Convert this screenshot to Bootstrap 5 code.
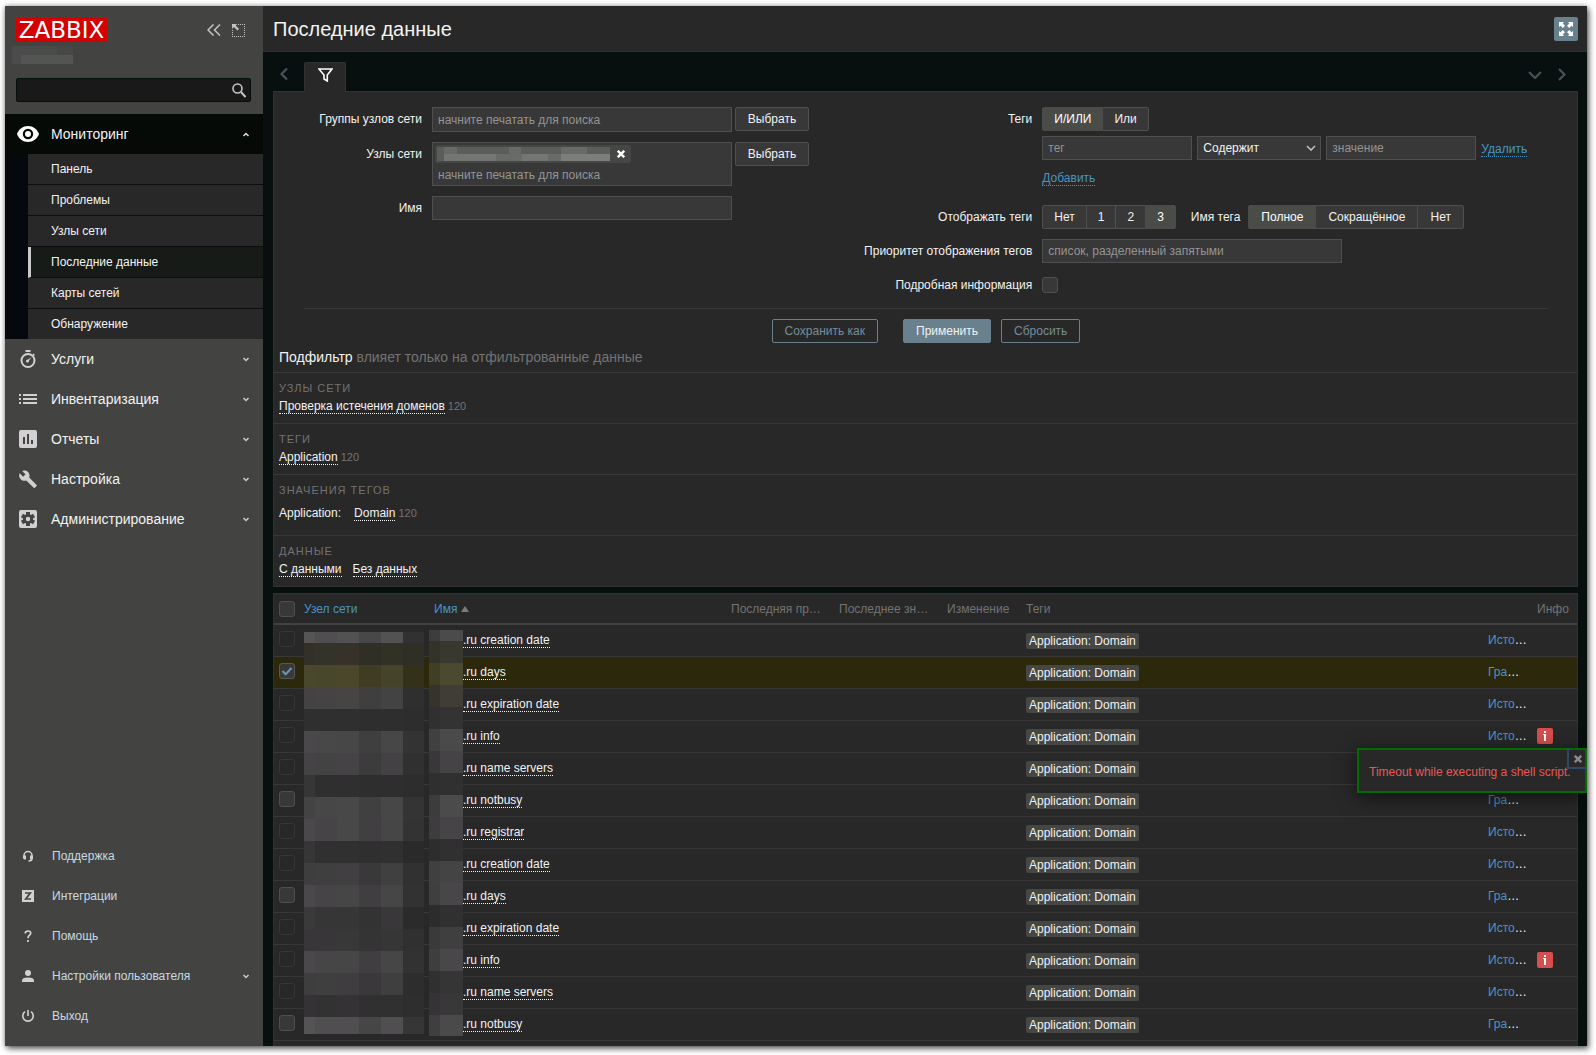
<!DOCTYPE html>
<html lang="ru">
<head>
<meta charset="utf-8">
<meta name="viewport" content="width=device-width, initial-scale=1">
<title>Последние данные</title>
<link href="https://cdn.jsdelivr.net/npm/bootstrap@5.3.0/dist/css/bootstrap.min.css" rel="stylesheet">
<style>
:root{--line:#383838;--panel:#282828;--edge:#4f4f4f;--ink:#f2f2f2;--muted:#737373;--blue:#4796c4;--steel:#69808d;--field:#383838;--sel:#4a4c48}
body{font-family:"Liberation Sans",Arial,sans-serif;font-size:12px;line-height:14px;color:var(--ink);background:#fff;padding:6px 9px 9px 5px}
.shell{min-height:calc(100vh - 15px);box-shadow:0 0 5px rgba(0,0,0,.35),2px 3px 6px rgba(0,0,0,.55);background:#07100e}
svg{display:block;flex:none}
a{text-decoration:none;color:inherit}
/* sidebar */
.side{width:258px;flex:none;background:#434441}
.side-top{height:108px;padding:12px 12px 0 11px}
.brand{background:#d40000;color:#fff;font-family:"DejaVu Sans",sans-serif;font-size:23px;line-height:24px;width:91px;height:24px;text-align:center}
.side-top button{background:none;border:0;padding:0;color:#c4c4c4}
.head-btns{gap:11px;margin-right:6px}
.masked-name{margin:4px 0 0 -4px}
.search-box{height:24px;margin-top:14px;background:#191919;border:1px solid #04100e;border-radius:2px;padding-right:4px}
.search-box input{background:none;border:0;outline:0;color:var(--ink);min-width:0}
.menu-link{height:40px;padding:0 13px 0 12px;font-size:14px;color:var(--ink)}
.menu-link .ico{width:22px;margin-right:12px;color:#d3d0d3}
.menu-link.open{background:#060a06}
.menu-link.open .ico{color:#fff}
.sub{background:#05080d;padding-left:23px}
.sub a{display:block;height:31px;line-height:30px;padding-left:23px;background:var(--panel);border-bottom:1px solid #0a0e10}
.sub a.current{background:#171b17;border-left:3px solid #c9c9c9;padding-left:20px}
.sub a:last-child{height:30px;border:0}
.low{padding-bottom:10px}
.low .menu-link{font-size:12px;color:#c7d9e4}
.low .menu-link .ico{margin-right:13px}
/* page */
.page{min-width:0;overflow:hidden}
.top-bar{height:46px;background:var(--panel);border-bottom:1px solid #303232;padding:0 9px 0 10px}
.top-bar h1{font-size:20px;line-height:24px;margin:0;font-weight:400}
.kiosk{width:24px;height:24px;background:var(--steel);border:0;border-radius:2px;padding:5px}
.work{padding:10px 9px 0 10px}
.tabs{height:29px;padding:0 8px 0 7px}
.tabs button{background:none;border:0;padding:6px 0 0;color:#47525a}
.tabs .tab-on{width:42px;height:30px;background:var(--panel);border:1px solid #303232;border-bottom:0;border-radius:2px 2px 0 0;margin:0 auto 0 16px;position:relative;color:#fff;padding:0 0 6px}
.panel{background:var(--panel);border:1px solid #303232}
.filter{padding:15px 29px 0 30px}
.lab{line-height:24px;text-align:right;margin-right:10px;flex:none}
.left .lab{width:118px}
.right .lab{width:210px}
.form-line{margin-bottom:10px}
.fld,.fld:focus{height:24px;background:var(--field);border:1px solid var(--edge);border-radius:0;color:var(--ink);font-size:12px;line-height:14px;padding:4px 5px;box-shadow:none}
.fld::placeholder,.multi input::placeholder{color:#949494;opacity:1}
.w300{width:300px}.w150{width:150px}
.select-wrap{width:124px}
select.fld{appearance:none;background-image:url("data:image/svg+xml,%3Csvg xmlns='http://www.w3.org/2000/svg' viewBox='0 0 10 8'%3E%3Cpath d='M1 2l4 4 4-4' fill='none' stroke='%23bbb' stroke-width='1.6'/%3E%3C/svg%3E");background-repeat:no-repeat;background-position:right 4px center;background-size:10px 8px}
.multi{width:300px;min-height:25px;background:var(--field);border:1px solid var(--edge);padding:0 2px}
.multi input{display:block;width:100%;height:22px;background:none;border:0;outline:0;padding:1px 3px 0;color:var(--ink)}
.chip{width:196px;height:18px;margin-top:2px;background:#454745;border-radius:2px;padding-left:2px}
.chip button{background:none;border:0;padding:0;margin-left:7px}
.b{height:24px;font-size:12px;line-height:14px;padding:0 11px;border-radius:2px;border:1px solid var(--edge);background:var(--field);color:var(--ink)}
.b:hover{background:var(--sel);color:#fff}
.pick{margin-left:3px;width:74px}
.seg .b{display:flex;align-items:center;background:var(--field);color:var(--ink);border-color:var(--edge)}
.btn-check:checked+.b{background:var(--sel);border-color:var(--sel);color:#fff}
.roomy .b{padding:0 12px}
.tagline{gap:5px;margin-top:5px}
.tagline .dot{margin:6px 0 3px}
.add-row{height:35px;padding-top:11px}
.tag-name{line-height:24px;margin:0 8px 0 15px}
.tag-key{margin-right:13px}
.data-yes{margin-right:11px}
.dot{display:inline-block;border-bottom:1px dotted;line-height:14px}
.blue{color:var(--blue)}
.ck{width:16px;height:16px;margin:0;background-color:var(--field);border:1px solid var(--edge);border-radius:2px;appearance:none;display:block;box-shadow:none}
.ck:disabled{background-color:var(--panel);border-color:#363636;opacity:1}
.ck:checked{background-color:#383838;border-color:#585858;background-size:14px 14px;background-image:url("data:image/svg+xml,%3Csvg xmlns='http://www.w3.org/2000/svg' viewBox='0 0 14 14'%3E%3Cpath d='M2.5 7l3.200 3.200L11.500 4' fill='none' stroke='%237590a2' stroke-width='2.2'/%3E%3C/svg%3E")}
.actions{border-top:1px solid var(--line);padding-top:10px;margin-top:11px}
.line-btn{background:none;border-color:var(--steel);color:#768d99}
.main-btn{background:var(--steel);border-color:var(--steel);margin:0 10px 0 25px}
.subtitle{font-size:14px;line-height:29px;font-weight:400;margin:0;padding-left:5px}
.subtitle span,.n120{color:var(--muted)}
.n120{font-size:11px;margin-left:3px}
.part{height:51px;border-top:1px solid var(--line);padding:8px 5px 0}
.part h3{font-size:11px;line-height:14px;color:var(--muted);letter-spacing:1px;text-transform:uppercase;font-weight:400;margin:0 0 4px}
.part.tall{height:61px}
.part.tall h3{margin-bottom:9px}
/* data table */
.data{margin-top:6px;border-bottom:0;position:relative}
.data table{width:100%;table-layout:fixed;border-collapse:separate;border-spacing:0}
.data th{height:31px;border-bottom:2px solid #424242;font-weight:400;color:var(--muted);padding:0 5px;white-space:nowrap}
.data td{height:32px;border-bottom:1px solid var(--line);padding:8px 5px 0;white-space:nowrap;vertical-align:top}
.data td:first-child{padding-top:6px}
.data td:last-child{padding-top:7px}
.data tr.picked td{background:#2c280b}
.data td.nm{padding-left:34px}
.c-ck{width:25px}.c-host{width:130px}.c-name{width:297px}.c-last{width:108px}.c-chg{width:79px}.c-hist{width:49px}.c-info{width:45px}
.tagbox{display:block;width:fit-content;background:#454745;border-radius:2px;padding:1px 3px;line-height:14px}
.inf{width:16px;height:16px;background:#d64e4e;border:0;border-radius:2px;padding:0;display:block}
.mosaic{position:absolute;left:0;top:0;z-index:1}
.hint{position:absolute;right:-10px;top:27px;width:230px;height:45px;z-index:5;background:var(--panel);border:2px solid #006b00;color:#e45959;box-shadow:0 4px 20px rgba(0,0,0,.6);padding:15px 10px}
.hint button{position:absolute;right:-2px;top:-2px;width:20px;height:21px;background:none;border:2px solid #2c4966;border-width:0 0 2px 2px;padding:2px 0 0;color:#8a8a8a}
</style>
<script src="https://cdn.jsdelivr.net/npm/bootstrap@5.3.0/dist/js/bootstrap.bundle.min.js"></script>
</head>
<body>
<div class="shell d-flex">
<aside class="side d-flex flex-column">
  <div class="side-top">
    <div class="d-flex align-items-center">
      <a href="#" class="brand">ZABBIX</a>
      <div class="head-btns d-flex align-items-center ms-auto">
        <button aria-label="Свернуть"><svg width="14" height="12" viewBox="0 0 14 12" fill="none" stroke="currentColor" stroke-width="1.500"><path d="M6.500 .5 1 6l5.500 5.500M13 .5 7.500 6 13 11.500"/></svg></button>
        <button aria-label="Скрыть"><svg width="13" height="13" viewBox="0 0 13 13"><path d="M0 0h5L3.700 1.500 7 5 5.500 6.500 1.900 3 0 5z" fill="currentColor"/><path d="M6 .5h7M0 12.500h13" fill="none" stroke="currentColor" stroke-dasharray="1 1"/><path d="M.5 6v7M12.500 0v13" fill="none" stroke="currentColor" stroke-dasharray="1 1"/></svg></button>
      </div>
    </div>
    <svg class="masked-name" width="61" height="18"><path fill="#4a4b4a" d="M0 0h61v18H0z"/><path fill="#474846" d="M45 0h16v9H45z"/><path fill="#535553" d="M9 9h52v9H9z"/></svg>
    <form class="search-box d-flex align-items-center">
      <input class="flex-grow-1" type="text" aria-label="Поиск">
      <button aria-label="Найти"><svg width="14" height="15" viewBox="0 0 14 15" fill="none" stroke="currentColor"><circle cx="5.500" cy="5.500" r="4.500" stroke-width="1.600"/><path d="M9 9l4.500 5" stroke-width="2"/></svg></button>
    </form>
  </div>
  <nav>
    <a href="#" class="menu-link open d-flex align-items-center"><span class="ico d-flex justify-content-center"><svg width="22" height="16" viewBox="0 0 22 16"><path fill="currentColor" fill-rule="evenodd" d="M11 0C6 0 1.800 3.200 0 8c1.800 4.800 6 8 11 8s9.200-3.200 11-8C20.200 3.200 16 0 11 0zm0 13.200A5.200 5.200 0 1 1 11 2.800a5.200 5.200 0 0 1 0 10.400zM11 5a3 3 0 1 0 0 6 3 3 0 0 0 0-6z"/></svg></span>Мониторинг<svg class="ms-auto" width="8" height="6" viewBox="0 0 8 6" fill="none" stroke="#ddd" stroke-width="1.500"><path d="M1.500 5 4 2.500 6.500 5"/></svg></a>
    <div class="sub">
      <a href="#">Панель</a><a href="#">Проблемы</a><a href="#">Узлы сети</a><a href="#" class="current">Последние данные</a><a href="#">Карты сетей</a><a href="#">Обнаружение</a>
    </div>
    <a href="#" class="menu-link d-flex align-items-center"><span class="ico d-flex justify-content-center"><svg width="16" height="18" viewBox="0 0 16 18" fill="none" stroke="currentColor"><circle cx="8" cy="10.500" r="6.500" stroke-width="2"/><path d="M5.500 1h5" stroke-width="2"/><path d="M13 4l1.500 1.500" stroke-width="1.500"/><path d="M11.800 7 6 11l1.500 1.500z" fill="currentColor" stroke="none"/><circle cx="7.500" cy="11" r="1.500" fill="currentColor" stroke="none"/></svg></span>Услуги<svg class="ms-auto" width="8" height="6" viewBox="0 0 8 6" fill="none" stroke="#ccc" stroke-width="1.500"><path d="M1.500 2 4 4.500 6.500 2"/></svg></a>
    <a href="#" class="menu-link d-flex align-items-center"><span class="ico d-flex justify-content-center"><svg width="18" height="10" viewBox="0 0 18 10" fill="currentColor"><path d="M0 0h2v2H0zM4 0h14v2H4zM0 4h2v2H0zM4 4h14v2H4zM0 8h2v2H0zM4 8h14v2H4z"/></svg></span>Инвентаризация<svg class="ms-auto" width="8" height="6" viewBox="0 0 8 6" fill="none" stroke="#ccc" stroke-width="1.500"><path d="M1.500 2 4 4.500 6.500 2"/></svg></a>
    <a href="#" class="menu-link d-flex align-items-center"><span class="ico d-flex justify-content-center"><svg width="18" height="18" viewBox="0 0 18 18" fill="currentColor"><path fill-rule="evenodd" d="M2 0h14a2 2 0 0 1 2 2v14a2 2 0 0 1-2 2H2a2 2 0 0 1-2-2V2a2 2 0 0 1 2-2zm2 7v7h2V7zm4-3v10h2V4zm4 6v4h2v-4z"/></svg></span>Отчеты<svg class="ms-auto" width="8" height="6" viewBox="0 0 8 6" fill="none" stroke="#ccc" stroke-width="1.500"><path d="M1.500 2 4 4.500 6.500 2"/></svg></a>
    <a href="#" class="menu-link d-flex align-items-center"><span class="ico d-flex justify-content-center"><svg width="18" height="18" viewBox="0 0 18 18" fill="currentColor"><path d="M17.600 14.900 10.200 7.500c.7-1.900.3-4.100-1.200-5.600C7.400.3 5 0 3.100.9l3.400 3.400-2.400 2.400L.7 3.300c-1 1.900-.6 4.300 1 5.900 1.500 1.500 3.700 1.900 5.600 1.200l7.400 7.400c.3.3.8.3 1.100 0l1.900-1.900c.3-.3.3-.8-.1-1z"/></svg></span>Настройка<svg class="ms-auto" width="8" height="6" viewBox="0 0 8 6" fill="none" stroke="#ccc" stroke-width="1.500"><path d="M1.500 2 4 4.500 6.500 2"/></svg></a>
    <a href="#" class="menu-link d-flex align-items-center"><span class="ico d-flex justify-content-center"><svg width="18" height="18" viewBox="0 0 18 18"><rect width="18" height="18" rx="2" fill="currentColor"/><g fill="#434441"><circle cx="9" cy="9" r="5"/><path d="M7 2h4v14H7z"/><path d="M7 2h4v14H7z" transform="rotate(60 9 9)"/><path d="M7 2h4v14H7z" transform="rotate(120 9 9)"/></g><circle cx="9" cy="9" r="2.200" fill="currentColor"/></svg></span>Администрирование<svg class="ms-auto" width="8" height="6" viewBox="0 0 8 6" fill="none" stroke="#ccc" stroke-width="1.500"><path d="M1.500 2 4 4.500 6.500 2"/></svg></a>
  </nav>
  <nav class="low mt-auto">
    <a href="#" class="menu-link d-flex align-items-center"><span class="ico d-flex justify-content-center"><svg width="12" height="12" viewBox="0 0 12 12"><path d="M2 7V5.500a4 4 0 0 1 8 0V9q0 1.800-3.500 2" fill="none" stroke="currentColor" stroke-width="1.500"/><path d="M1 5.500h3v4H2.500L1 8.500zM11 5.500H8v4h1.500L11 8.500z" fill="currentColor"/></svg></span>Поддержка</a>
    <a href="#" class="menu-link d-flex align-items-center"><span class="ico d-flex justify-content-center"><svg width="12" height="12" viewBox="0 0 12 12"><path fill="currentColor" d="M0 0h12v12H0z"/><path d="M3 3h5.300L3.700 9H9" fill="none" stroke="#434441" stroke-width="1.700"/></svg></span>Интеграции</a>
    <a href="#" class="menu-link d-flex align-items-center"><span class="ico d-flex justify-content-center"><svg width="8" height="12" viewBox="0 0 8 12" fill="none" stroke="currentColor" stroke-width="1.700"><path d="M1.200 3.500Q1.200 1 4 1t2.700 2.300Q6.700 4.500 5.200 5.500 4 6.300 4 8.300M4 10v2"/></svg></span>Помощь</a>
    <a href="#" class="menu-link d-flex align-items-center"><span class="ico d-flex justify-content-center"><svg width="12" height="12" viewBox="0 0 12 12" fill="currentColor"><circle cx="6" cy="3" r="3"/><path d="M0 12v-1.500Q0 7.500 6 7.500t6 3V12z"/></svg></span>Настройки пользователя<svg class="ms-auto" width="8" height="6" viewBox="0 0 8 6" fill="none" stroke="#ccc" stroke-width="1.500"><path d="M1.500 2 4 4.500 6.500 2"/></svg></a>
    <a href="#" class="menu-link d-flex align-items-center"><span class="ico d-flex justify-content-center"><svg width="12" height="12" viewBox="0 0 12 12" fill="none" stroke="currentColor" stroke-width="1.600"><path d="M6 0v6M3 1.700a5.200 5.200 0 1 0 6 0"/></svg></span>Выход</a>
  </nav>
</aside>

<main class="page flex-grow-1 d-flex flex-column">
  <header class="top-bar d-flex align-items-center justify-content-between">
    <h1>Последние данные</h1>
    <button class="kiosk" aria-label="Полный экран"><svg width="14" height="14" viewBox="0 0 14 14" fill="#fff"><path id="arr" d="M0 0h5L3.700 1.500 6 3.800 3.800 6 1.500 3.700 0 5z"/><use href="#arr" transform="matrix(-1 0 0 1 14 0)"/><use href="#arr" transform="matrix(1 0 0 -1 0 14)"/><use href="#arr" transform="matrix(-1 0 0 -1 14 14)"/></svg></button>
  </header>
  <div class="work flex-grow-1 d-flex flex-column">
    <div class="tabs d-flex align-items-start">
      <button aria-label="Назад"><svg width="8" height="12" viewBox="0 0 8 12" fill="none" stroke="currentColor" stroke-width="2.200"><path d="M7 .5 1.500 6 7 11.500"/></svg></button>
      <button class="tab-on d-flex align-items-center justify-content-center" aria-label="Фильтр"><svg width="15" height="14" viewBox="0 0 15 14" fill="none" stroke="currentColor" stroke-width="1.600"><path d="M1 1h13L9.300 7v6L6 11V7z"/></svg></button>
      <button class="pt-2 me-3" aria-label="Список"><svg width="14" height="9" viewBox="0 0 14 9" fill="none" stroke="currentColor" stroke-width="2.200"><path d="M1 2l6 6 6-6"/></svg></button>
      <button class="me-1" aria-label="Вперёд"><svg width="8" height="13" viewBox="0 0 8 13" fill="none" stroke="currentColor" stroke-width="2.200"><path d="M1 1l5.500 5.500L1 12"/></svg></button>
    </div>
    <section class="panel">
      <form class="filter">
        <div class="row g-0">
          <div class="col-5 left">
            <div class="form-line d-flex"><label class="lab" for="grp">Группы узлов сети</label><div class="multi"><input id="grp" type="text" placeholder="начните печатать для поиска"></div><button type="button" class="btn b pick">Выбрать</button></div>
            <div class="form-line d-flex"><label class="lab" for="hst">Узлы сети</label><div class="multi"><div class="chip d-flex align-items-center"><svg width="173" height="14"><path fill="#5b5d5a" d="M0 0h173v14H0z"/><path fill="#676a67" d="M7 0h13v7H7zM72 0h12v7H72zM124 0h26v7h-26z"/><path fill="#747574" d="M7 7h52v7H7zM85 7h26v7H85z"/><path fill="#696b68" d="M59 7h26v7H59zM111 7h13v7h-13z"/><path fill="#7c7d7c" d="M124 7h49v7h-49z"/></svg><button type="button" aria-label="Убрать"><svg width="8" height="8" viewBox="0 0 8 8" stroke="#fff" stroke-width="2.400"><path d="M.8.8l6.400 6.400M7.200.8.8 7.200"/></svg></button></div><input id="hst" type="text" placeholder="начните печатать для поиска"></div><button type="button" class="btn b pick">Выбрать</button></div>
            <div class="d-flex"><label class="lab" for="nm">Имя</label><input id="nm" type="text" class="form-control fld w300"></div>
          </div>
          <div class="col-7 right">
            <div class="form-line d-flex"><span class="lab">Теги</span>
              <div>
                <div class="btn-group seg" role="group" aria-label="Теги"><input class="btn-check" type="radio" name="ev" id="e1" checked><label class="btn b" for="e1">И/ИЛИ</label><input class="btn-check" type="radio" name="ev" id="e2"><label class="btn b" for="e2">Или</label></div>
                <div class="d-flex tagline"><input type="text" class="form-control fld w150" placeholder="тег" aria-label="тег"><select class="form-select fld select-wrap" aria-label="Оператор"><option>Содержит</option></select><input type="text" class="form-control fld w150" placeholder="значение" aria-label="значение"><a href="#" class="dot blue">Удалить</a></div>
                <div class="add-row"><a href="#" class="dot blue">Добавить</a></div>
              </div>
            </div>
            <div class="form-line d-flex"><span class="lab">Отображать теги</span>
              <div class="btn-group seg" role="group" aria-label="Отображать теги"><input class="btn-check" type="radio" name="sh" id="s0"><label class="btn b" for="s0">Нет</label><input class="btn-check" type="radio" name="sh" id="s1"><label class="btn b" for="s1">1</label><input class="btn-check" type="radio" name="sh" id="s2"><label class="btn b" for="s2">2</label><input class="btn-check" type="radio" name="sh" id="s3" checked><label class="btn b" for="s3">3</label></div>
              <span class="tag-name">Имя тега</span>
              <div class="btn-group seg roomy" role="group" aria-label="Имя тега"><input class="btn-check" type="radio" name="tn" id="t1" checked><label class="btn b" for="t1">Полное</label><input class="btn-check" type="radio" name="tn" id="t2"><label class="btn b" for="t2">Сокращённое</label><input class="btn-check" type="radio" name="tn" id="t3"><label class="btn b" for="t3">Нет</label></div>
            </div>
            <div class="form-line d-flex"><label class="lab" for="pr">Приоритет отображения тегов</label><input id="pr" type="text" class="form-control fld w300" placeholder="список, разделенный запятыми"></div>
            <div class="d-flex align-items-center"><label class="lab" for="dt">Подробная информация</label><input id="dt" type="checkbox" class="form-check-input ck"></div>
          </div>
        </div>
        <div class="actions roomy d-flex justify-content-center"><button type="button" class="btn b line-btn">Сохранить как</button><button type="button" class="btn b main-btn">Применить</button><button type="button" class="btn b line-btn">Сбросить</button></div>
      </form>
      <h2 class="subtitle">Подфильтр <span>влияет только на отфильтрованные данные</span></h2>
      <div class="part"><h3>Узлы сети</h3><a href="#" class="dot">Проверка истечения доменов</a><span class="n120">120</span></div>
      <div class="part"><h3>Теги</h3><a href="#" class="dot">Application</a><span class="n120">120</span></div>
      <div class="part tall"><h3>Значения тегов</h3><span class="tag-key">Application:</span><a href="#" class="dot">Domain</a><span class="n120">120</span></div>
      <div class="part"><h3>Данные</h3><a href="#" class="dot data-yes">С данными</a><a href="#" class="dot">Без данных</a></div>
    </section>
    <section class="panel data flex-grow-1">
      <table>
        <colgroup><col class="c-ck"><col class="c-host"><col class="c-name"><col class="c-last"><col class="c-last"><col class="c-chg"><col><col class="c-hist"><col class="c-info"></colgroup>
        <thead><tr><th><input type="checkbox" class="form-check-input ck" aria-label="Выбрать все"></th><th><a href="#" class="blue">Узел сети</a></th><th><a href="#" class="blue d-flex align-items-center">Имя<svg class="ms-1" width="8" height="6" viewBox="0 0 8 6"><path fill="#7c7c7c" d="M4 0l4 6H0z"/></svg></a></th><th>Последняя пр…</th><th>Последнее зн…</th><th>Изменение</th><th>Теги</th><th></th><th>Инфо</th></tr></thead>
        <tbody id="rows"></tbody>
      </table>
      <svg class="mosaic" id="mosaic" width="192" height="446"></svg>
    </section>
  </div>
</main>
</div>
<script>
// item name, has numeric graph, has error
const items = [
  ['creation date',0],['days',1],['expiration date',0],['info',0,1],['name servers',0],['notbusy',1],['registrar',0],
  ['creation date',0],['days',1],['expiration date',0],['info',0,1],['name servers',0],['notbusy',1]
];
const picked = 1, openHint = 3;
document.getElementById('rows').innerHTML = items.map(([name, graph, err], i) => {
  const hint = i === openHint ? '<div class="hint">Timeout while executing a shell script.<button type="button" aria-label="Закрыть"><svg class="mx-auto" width="8" height="8" viewBox="0 0 8 8" stroke="currentColor" stroke-width="2.4"><path d="M.8.8l6.400 6.400M7.200.8.8 7.200"/></svg></button></div>' : '';
  const info = err ? '<button type="button" class="inf" aria-label="Ошибка"><svg width="16" height="16" fill="#fff"><path d="M7 3h2v2H7zM6 6h3v7H7V7H6z"/></svg></button>' : '';
  // the row under the open hint has its link covered by it
  const link = i === openHint + 1 ? '' : `<a href="#" class="blue">${graph ? 'Гра' : 'Исто'}</a>…`;
  return `<tr class="${i === picked ? 'picked' : ''}"><td><input type="checkbox" class="form-check-input ck" aria-label="${name}" ${graph ? '' : 'disabled'} ${i === picked ? 'checked' : ''}></td><td></td><td class="nm"><a href="#" class="dot">.ru ${name}</a></td><td></td><td></td><td></td><td><span class="tagbox">Application: Domain</span></td><td>${link}</td><td class="position-relative">${info}${hint}</td></tr>`;
}).join('');

// blurred-out host and domain names: two columns of colour blocks
const hostX = [30,41,63,85,107,129,150], nameX = [155,166,189];
const hostC = [
  '565556 504e50 525252 484848 525252 323032','33302a 34332a 36322a 302f26 313126 302f26','49472c 49472b 4b472b 3f3c23 46432b 33311a',
  '444243 454344 464544 403f40 434343 302f30','2f2f2f 2f2f2f 2f2f2f 2e2e2e 2e2e2e 2d2d2d','4a484a 484848 474747 3f3f3f 474747 333333',
  '454345 434343 454345 3c3c3c 434143 303030','363636 2f2f2f 2f2f2f 2e2e2e 2e2e2e 2d2d2d','434343 474747 484848 404040 474747 343434',
  '4a484a 464446 484848 413f41 464646 333333','363636 303030 303030 2f2f2f 303030 2a2a2a','3e3e3e 3f3f3f 423f42 3a393a 404040 313131',
  '4a484a 464446 464646 403e40 464646 323232','3a3a3a 363636 363636 333333 3a373a 2b2b2b','383638 383638 383838 343434 363636 303030',
  '4a484a 474647 464646 403e40 464646 323232','3e3e3e 3f3f3f 403d40 3a383a 3f3f3f 2d2d2d','343234 323232 343234 303030 303030 2e2e2e','545454 504e50 504e50 464646 504e50 363636'];
const nameC = ['3e3c3e 4b4b4b','33332a 39382e','403f24 4b4930','36322c 403c36','303030 333333','404040 4a4a4a','383838 454345','2f2f2f 303030','3c3c3c 4b4b4b','3d3d3d 464446','2d2d2d 303030','404040 444444','3f3f3f 484648','2c2c2c 303030','3a3a3a 3f3f3f','3e3e3e 494749','303030 353535','353335 383838','403e40 4a4a4a'];
const blocks = (xs, rows, top, end) => rows.map((r, j) => {
  const y = j ? top + 11 + (j - 1) * 22 : top, y2 = Math.min(top + 11 + j * 22, end);
  return r.split(' ').map((c, k) => `<rect x="${xs[k]}" y="${y}" width="${xs[k + 1] - xs[k]}" height="${y2 - y}" fill="#${c}"/>`).join('');
}).join('');
document.getElementById('mosaic').innerHTML = `<g shape-rendering="crispEdges">${blocks(hostX, hostC, 38, 440)}${blocks(nameX, nameC, 36, 442)}</g>`;
</script>
</body>
</html>
